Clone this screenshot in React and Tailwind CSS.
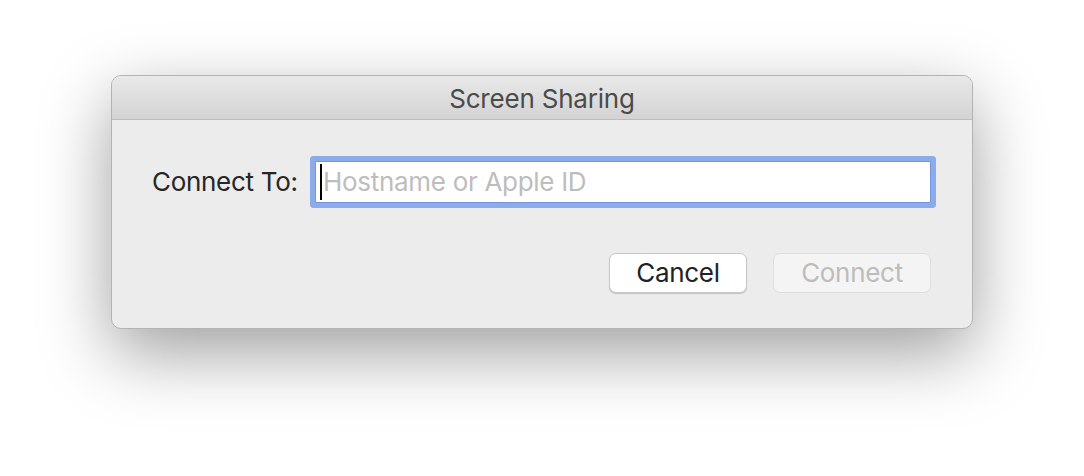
import React from 'react';

const font = { fontFamily: 'Inter, "Liberation Sans", sans-serif' };

export default function App() {
  return (
    <div className="flex h-[476px] w-full justify-center bg-white pt-[75px]" style={font}>
      <div className="flex h-[254px] w-[862px] flex-col overflow-hidden rounded-[10px] border border-[#b3b3b3] bg-[#ececec] shadow-[0_24px_70px_rgba(0,0,0,0.38)]">
        {/* title bar */}
        <div className="flex h-[44px] shrink-0 items-center justify-center border-b border-[#bcbcbc] bg-gradient-to-b from-[#e9e9e9] to-[#d3d3d3] pt-[2px]">
          <span className="text-[26px] leading-none tracking-[-0.2px] text-[#4a4a4a]">Screen Sharing</span>
        </div>

        {/* body */}
        <div className="flex flex-1 flex-col pl-[40px] pr-[41px] pt-[41px]">
          <div className="flex items-center">
            <span className="w-[163px] text-[26px] leading-none tracking-[-0.3px] text-[#262626]">Connect To:</span>
            <div className="flex h-[42px] flex-1 items-center rounded-[1px] border border-[#7495de] bg-white pl-[4px] shadow-[0_0_0_5px_#8cabea]">
              <span className="mr-[1px] h-[36px] w-[2px] bg-black" />
              <span className="text-[26px] leading-none tracking-[-0.3px] text-[#bdbdbd]">Hostname or Apple ID</span>
            </div>
          </div>

          <div className="mt-[50px] flex justify-end gap-[26px]">
            <button
              type="button"
              className="h-[40px] w-[138px] rounded-[7px] border border-[#c8c8c8] bg-white text-[26px] leading-none tracking-[-0.3px] text-[#222] shadow-[0_1px_1px_rgba(0,0,0,0.18)]"
            >
              Cancel
            </button>
            <button
              type="button"
              className="h-[40px] w-[158px] rounded-[7px] border border-[#dedede] bg-[#f4f4f4] text-[26px] leading-none tracking-[-0.3px] text-[#bcbcbc]"
            >
              Connect
            </button>
          </div>
        </div>
      </div>
    </div>
  );
}
